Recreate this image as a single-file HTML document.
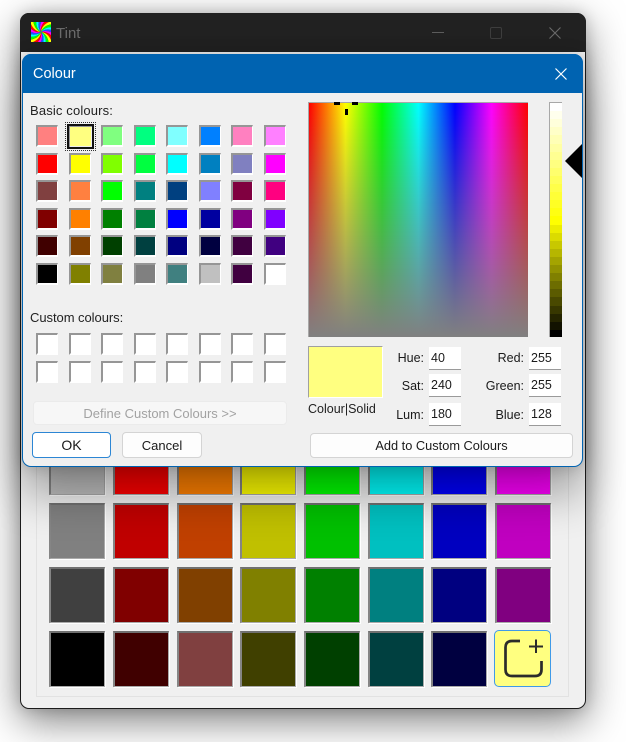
<!DOCTYPE html>
<html><head><meta charset="utf-8"><title>Tint</title>
<style>
html,body{margin:0;padding:0;background:#fff}
body{width:626px;height:742px;position:relative;overflow:hidden;font-family:"Liberation Sans",sans-serif;font-size:12.5px;color:#1a1a1a}
div{box-sizing:border-box}
.a{position:absolute}
#win{left:20px;top:13px;width:566px;height:696px;background:#f0f0f0;border-radius:9px;border:1px solid #1c1c1c;box-shadow:0 12px 40px rgba(0,0,0,.5),0 0 14px rgba(0,0,0,.16)}
#tb{left:20px;top:13px;width:566px;height:39px;background:#212121;border-radius:9px 9px 0 0}
#panel{left:36px;top:440px;width:533px;height:257px;border:1px solid #e2e2e2;border-top:0}
.big{position:absolute;width:56px;height:56px;border-style:solid;border-width:2px 1px 1px 2px;border-color:#707070 #aaa #aaa #858585;box-shadow:1px 1px 0 #fff}
#dlg{left:22px;top:54px;width:561px;height:413px;background:#f0f0f0;border:1px solid #0063b1;border-radius:9px;box-shadow:0 28px 44px rgba(0,0,0,.33),0 0 16px rgba(0,0,0,.18)}
#dt{left:22px;top:54px;width:561px;height:39px;background:#0063b1;border-radius:9px 9px 0 0}
.g{position:absolute;display:grid;grid-template-columns:repeat(8,32.5px);grid-auto-rows:27.5px}
.g div{width:22px;height:22px;border-style:solid;border-width:2px 1px 2px 2px;border-color:#969696 #fff #fff #969696}
.t{position:absolute;white-space:nowrap;line-height:16px}
.l{position:absolute;white-space:nowrap;line-height:16px;text-align:right;width:60px}
.i{position:absolute;width:32px;height:23px;background:#fff;border-bottom:1px solid #9a9a9a;padding-left:2px;line-height:22px;font-size:12.5px}
.b{position:absolute;text-align:center;background:#fdfdfd;border:1px solid #d4d4d4;border-radius:4px}
</style></head><body>
<div id="win" class="a"></div>
<div id="tb" class="a"></div>

<svg class="a" style="left:31px;top:22px" width="20" height="20" viewBox="0 0 20 20">
<path transform="rotate(0 10 10)" fill="#2050ff" d="M10 10Q16.130 4.860 26 10L25.450 14.140Q17.250 6.620 10 10Z"/>
<path transform="rotate(15 10 10)" fill="#f0f" d="M10 10Q16.130 4.860 26 10L25.450 14.140Q17.250 6.620 10 10Z"/>
<path transform="rotate(30 10 10)" fill="#f00" d="M10 10Q16.130 4.860 26 10L25.450 14.140Q17.250 6.620 10 10Z"/>
<path transform="rotate(45 10 10)" fill="#ff0" d="M10 10Q16.130 4.860 26 10L25.450 14.140Q17.250 6.620 10 10Z"/>
<path transform="rotate(60 10 10)" fill="#0f0" d="M10 10Q16.130 4.860 26 10L25.450 14.140Q17.250 6.620 10 10Z"/>
<path transform="rotate(75 10 10)" fill="#0ff" d="M10 10Q16.130 4.860 26 10L25.450 14.140Q17.250 6.620 10 10Z"/>
<path transform="rotate(90 10 10)" fill="#2050ff" d="M10 10Q16.130 4.860 26 10L25.450 14.140Q17.250 6.620 10 10Z"/>
<path transform="rotate(105 10 10)" fill="#f0f" d="M10 10Q16.130 4.860 26 10L25.450 14.140Q17.250 6.620 10 10Z"/>
<path transform="rotate(120 10 10)" fill="#f00" d="M10 10Q16.130 4.860 26 10L25.450 14.140Q17.250 6.620 10 10Z"/>
<path transform="rotate(135 10 10)" fill="#ff0" d="M10 10Q16.130 4.860 26 10L25.450 14.140Q17.250 6.620 10 10Z"/>
<path transform="rotate(150 10 10)" fill="#0f0" d="M10 10Q16.130 4.860 26 10L25.450 14.140Q17.250 6.620 10 10Z"/>
<path transform="rotate(165 10 10)" fill="#0ff" d="M10 10Q16.130 4.860 26 10L25.450 14.140Q17.250 6.620 10 10Z"/>
<path transform="rotate(180 10 10)" fill="#2050ff" d="M10 10Q16.130 4.860 26 10L25.450 14.140Q17.250 6.620 10 10Z"/>
<path transform="rotate(195 10 10)" fill="#f0f" d="M10 10Q16.130 4.860 26 10L25.450 14.140Q17.250 6.620 10 10Z"/>
<path transform="rotate(210 10 10)" fill="#f00" d="M10 10Q16.130 4.860 26 10L25.450 14.140Q17.250 6.620 10 10Z"/>
<path transform="rotate(225 10 10)" fill="#ff0" d="M10 10Q16.130 4.860 26 10L25.450 14.140Q17.250 6.620 10 10Z"/>
<path transform="rotate(240 10 10)" fill="#0f0" d="M10 10Q16.130 4.860 26 10L25.450 14.140Q17.250 6.620 10 10Z"/>
<path transform="rotate(255 10 10)" fill="#0ff" d="M10 10Q16.130 4.860 26 10L25.450 14.140Q17.250 6.620 10 10Z"/>
<path transform="rotate(270 10 10)" fill="#2050ff" d="M10 10Q16.130 4.860 26 10L25.450 14.140Q17.250 6.620 10 10Z"/>
<path transform="rotate(285 10 10)" fill="#f0f" d="M10 10Q16.130 4.860 26 10L25.450 14.140Q17.250 6.620 10 10Z"/>
<path transform="rotate(300 10 10)" fill="#f00" d="M10 10Q16.130 4.860 26 10L25.450 14.140Q17.250 6.620 10 10Z"/>
<path transform="rotate(315 10 10)" fill="#ff0" d="M10 10Q16.130 4.860 26 10L25.450 14.140Q17.250 6.620 10 10Z"/>
<path transform="rotate(330 10 10)" fill="#0f0" d="M10 10Q16.130 4.860 26 10L25.450 14.140Q17.250 6.620 10 10Z"/>
<path transform="rotate(345 10 10)" fill="#0ff" d="M10 10Q16.130 4.860 26 10L25.450 14.140Q17.250 6.620 10 10Z"/>
</svg>
<div class="t" style="left:56px;top:26px;color:#6b6b6b;font-size:15px">Tint</div>
<svg class="a" style="left:425px;top:20px" width="145" height="26" viewBox="0 0 145 26" fill="none">
<path d="M7 12.5H19" stroke="#5c5c5c"/>
<rect x="65.5" y="7.5" width="11" height="11" rx="1.5" stroke="#3d3d3d"/>
<path d="M124.5 7.5L135.5 18.5M135.5 7.5L124.5 18.5" stroke="#6a6a6a" stroke-width="1.1"/>
</svg>

<div id="panel" class="a"></div>
<div class="big" style="left:49px;top:439px;background:#c0c0c0"></div>
<div class="big" style="left:113px;top:439px;background:#f00"></div>
<div class="big" style="left:177px;top:439px;background:#ff8000"></div>
<div class="big" style="left:240px;top:439px;background:#ff0"></div>
<div class="big" style="left:304px;top:439px;background:#0f0"></div>
<div class="big" style="left:368px;top:439px;background:#0ff"></div>
<div class="big" style="left:431px;top:439px;background:#00f"></div>
<div class="big" style="left:495px;top:439px;background:#f0f"></div>

<div class="big" style="left:49px;top:503px;background:#808080"></div>
<div class="big" style="left:113px;top:503px;background:#c00000"></div>
<div class="big" style="left:177px;top:503px;background:#c04000"></div>
<div class="big" style="left:240px;top:503px;background:#c0c000"></div>
<div class="big" style="left:304px;top:503px;background:#00c000"></div>
<div class="big" style="left:368px;top:503px;background:#00c0c0"></div>
<div class="big" style="left:431px;top:503px;background:#0000c0"></div>
<div class="big" style="left:495px;top:503px;background:#c000c0"></div>

<div class="big" style="left:49px;top:567px;background:#404040"></div>
<div class="big" style="left:113px;top:567px;background:#800000"></div>
<div class="big" style="left:177px;top:567px;background:#804000"></div>
<div class="big" style="left:240px;top:567px;background:#808000"></div>
<div class="big" style="left:304px;top:567px;background:#008000"></div>
<div class="big" style="left:368px;top:567px;background:#008080"></div>
<div class="big" style="left:431px;top:567px;background:#000080"></div>
<div class="big" style="left:495px;top:567px;background:#800080"></div>

<div class="big" style="left:49px;top:631px;background:#000"></div>
<div class="big" style="left:113px;top:631px;background:#400000"></div>
<div class="big" style="left:177px;top:631px;background:#804040"></div>
<div class="big" style="left:240px;top:631px;background:#404000"></div>
<div class="big" style="left:304px;top:631px;background:#004000"></div>
<div class="big" style="left:368px;top:631px;background:#004040"></div>
<div class="big" style="left:431px;top:631px;background:#000040"></div>
<div class="a" style="left:494px;top:630px;width:57px;height:57px;background:#ffff80;border:1.5px solid #3f9ae8;border-radius:5px"></div>
<svg class="a" style="left:494px;top:630px" width="57" height="57" viewBox="0 0 57 57" fill="none" stroke="#2b2b2b" stroke-width="2.7">
<path d="M26 11H18Q11.5 11 11.5 17.5V39.5Q11.5 46 18 46H41Q47.5 46 47.5 39.5V31"/>
<path d="M35 16.5H49M42 9.5V23" stroke-width="2"/>
</svg>

<div id="dlg" class="a"></div>
<div id="dt" class="a"></div>
<div class="t" style="left:33px;top:66px;color:#fff;font-size:14.5px">Colour</div>
<svg class="a" style="left:553px;top:66px" width="16" height="16" viewBox="0 0 16 16" fill="none"><path d="M2.5 2.5L13.5 13.5M13.5 2.5L2.5 13.5" stroke="#fff" stroke-width="1.2"/></svg>

<div class="t" style="left:30px;top:103px;font-size:13px;letter-spacing:.15px;color:#222">Basic colours:</div>
<div class="g" style="left:36px;top:125px">
<div style="background:#ff8080"></div><div style="background:#ffff80"></div><div style="background:#80ff80"></div><div style="background:#00ff80"></div><div style="background:#80ffff"></div><div style="background:#0080ff"></div><div style="background:#ff80c0"></div><div style="background:#ff80ff"></div>
<div style="background:#f00"></div><div style="background:#ff0"></div><div style="background:#80ff00"></div><div style="background:#00ff40"></div><div style="background:#0ff"></div><div style="background:#0080c0"></div><div style="background:#8080c0"></div><div style="background:#f0f"></div>
<div style="background:#804040"></div><div style="background:#ff8040"></div><div style="background:#0f0"></div><div style="background:#008080"></div><div style="background:#004080"></div><div style="background:#8080ff"></div><div style="background:#800040"></div><div style="background:#ff0080"></div>
<div style="background:#800000"></div><div style="background:#ff8000"></div><div style="background:#008000"></div><div style="background:#008040"></div><div style="background:#00f"></div><div style="background:#0000a0"></div><div style="background:#800080"></div><div style="background:#8000ff"></div>
<div style="background:#400000"></div><div style="background:#804000"></div><div style="background:#004000"></div><div style="background:#004040"></div><div style="background:#000080"></div><div style="background:#000040"></div><div style="background:#400040"></div><div style="background:#400080"></div>
<div style="background:#000"></div><div style="background:#808000"></div><div style="background:#808040"></div><div style="background:#808080"></div><div style="background:#408080"></div><div style="background:#c0c0c0"></div><div style="background:#400040"></div><div style="background:#fff"></div>
</div>
<div class="a" style="left:65px;top:122px;width:31px;height:29px;border:1px dotted #333;background:#f0f0f0"></div>
<div class="a" style="left:67px;top:124px;width:27px;height:25px;border:2px solid #111;background:#ffff80;box-shadow:inset 1px 1px 0 #999,inset -1px -1px 0 #eee"></div>

<div class="t" style="left:30px;top:310px;font-size:13px;letter-spacing:-.05px;color:#222">Custom colours:</div>
<div class="g" style="left:36px;top:333px">
<div style="background:#fff"></div><div style="background:#fff"></div><div style="background:#fff"></div><div style="background:#fff"></div><div style="background:#fff"></div><div style="background:#fff"></div><div style="background:#fff"></div><div style="background:#fff"></div>
<div style="background:#fff"></div><div style="background:#fff"></div><div style="background:#fff"></div><div style="background:#fff"></div><div style="background:#fff"></div><div style="background:#fff"></div><div style="background:#fff"></div><div style="background:#fff"></div>
</div>

<div class="b" style="left:33px;top:401px;width:254px;height:24px;background:#f7f7f7;border-color:#ebebeb;color:#a2a2a2;line-height:23px;font-size:13px">Define Custom Colours &gt;&gt;</div>
<div class="b" style="left:32px;top:432px;width:79px;height:26px;background:#fff;border:1.5px solid #2c86d4;line-height:24px;font-size:14px;color:#1a1a1a">OK</div>
<div class="b" style="left:122px;top:432px;width:80px;height:26px;line-height:25px;font-size:13px;color:#1a1a1a">Cancel</div>

<div class="a" style="left:308px;top:102px;width:220px;height:235px;border-top:1px solid #a8a8a8;border-left:1px solid #a8a8a8;background:linear-gradient(to bottom,rgba(128,128,128,0),#808080),linear-gradient(to right,#f00,#ff0 16.67%,#0f0 33.33%,#0ff 50%,#00f 66.67%,#f0f 83.33%,#f00)"></div>
<div class="a" style="left:334px;top:102px;width:6px;height:3px;background:#000"></div>
<div class="a" style="left:352px;top:102px;width:6px;height:3px;background:#000"></div>
<div class="a" style="left:345px;top:109px;width:3px;height:6px;background:#000"></div>

<div class="a" style="left:549px;top:102px;width:13px;height:235px;border-top:1px solid #a8a8a8;border-left:1px solid #a8a8a8;background:linear-gradient(to bottom,#ffffff 0 8px,#ffffed 8px 16px,#ffffdb 16px 24px,#ffffc8 24px 32px,#ffffb6 32px 41px,#ffffa4 41px 49px,#ffff92 49px 57px,#ffff80 57px 65px,#ffff6d 65px 73px,#ffff5b 73px 81px,#ffff49 81px 89px,#ffff37 89px 97px,#ffff24 97px 105px,#ffff12 105px 113px,#ffff00 113px 122px,#eded00 122px 130px,#dbdb00 130px 138px,#c8c800 138px 146px,#b6b600 146px 154px,#a4a400 154px 162px,#929200 162px 170px,#808000 170px 178px,#6d6d00 178px 186px,#5b5b00 186px 194px,#494900 194px 203px,#373700 203px 211px,#242400 211px 219px,#121200 219px 227px,#000 227px 235px)"></div>
<svg class="a" style="left:564px;top:143px" width="18" height="36" viewBox="0 0 18 36"><path d="M1 18L18 1V35Z" fill="#000"/></svg>

<div class="a" style="left:308px;top:346px;width:75px;height:52px;background:#ffff80;border-style:solid;border-width:1px;border-color:#a0a0a0 #fff #fff #a0a0a0"></div>
<div class="t" style="left:308px;top:401px;font-size:12.5px;color:#222">Colour|Solid</div>

<div class="l" style="left:364px;top:350px">Hue:</div>
<div class="l" style="left:364px;top:378px">Sat:</div>
<div class="l" style="left:364px;top:407px">Lum:</div>
<div class="l" style="left:464px;top:350px">Red:</div>
<div class="l" style="left:464px;top:378px">Green:</div>
<div class="l" style="left:464px;top:407px">Blue:</div>
<div class="i" style="left:429px;top:347px">40</div>
<div class="i" style="left:429px;top:374px">240</div>
<div class="i" style="left:429px;top:403px">180</div>
<div class="i" style="left:529px;top:347px">255</div>
<div class="i" style="left:529px;top:374px">255</div>
<div class="i" style="left:529px;top:403px">128</div>

<div class="b" style="left:310px;top:433px;width:263px;height:25px;line-height:24px;font-size:12.8px;color:#1a1a1a">Add to Custom Colours</div>
</body></html>
